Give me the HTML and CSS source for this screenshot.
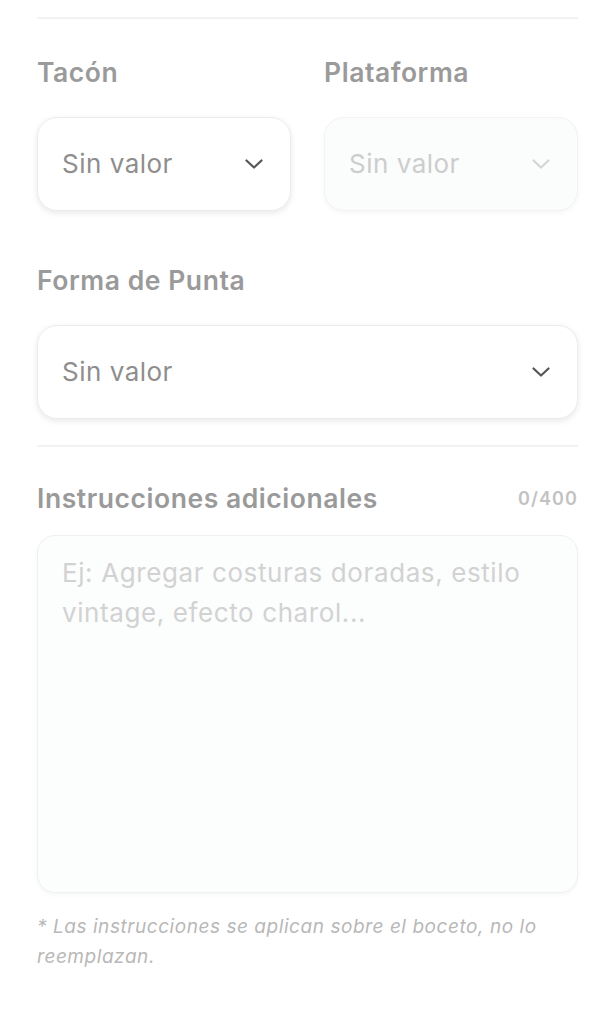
FILE: index.html
```html
<!DOCTYPE html>
<html lang="es">
<head>
<meta charset="utf-8">
<link rel="stylesheet" href="styles.css">
</head>
<body>
<div class="panel">
  <hr class="divider first">
  <div class="row">
    <div class="field">
      <div class="label">Tacón</div>
      <div class="select">
        <span class="value">Sin valor</span>
        <svg class="chev" width="18" height="10" viewBox="0 0 18 10"><path d="M1.5 1.5 L9 8.5 L16.5 1.5" fill="none" stroke="currentColor" stroke-width="2.2" stroke-linecap="round" stroke-linejoin="round"/></svg>
      </div>
    </div>
    <div class="field">
      <div class="label">Plataforma</div>
      <div class="select disabled">
        <span class="value">Sin valor</span>
        <svg class="chev" width="18" height="10" viewBox="0 0 18 10"><path d="M1.5 1.5 L9 8.5 L16.5 1.5" fill="none" stroke="currentColor" stroke-width="2.2" stroke-linecap="round" stroke-linejoin="round"/></svg>
      </div>
    </div>
  </div>
  <div class="field single">
    <div class="label">Forma de Punta</div>
    <div class="select">
      <span class="value">Sin valor</span>
      <svg class="chev" width="18" height="10" viewBox="0 0 18 10"><path d="M1.5 1.5 L9 8.5 L16.5 1.5" fill="none" stroke="currentColor" stroke-width="2.2" stroke-linecap="round" stroke-linejoin="round"/></svg>
    </div>
  </div>
  <hr class="divider second">
  <div class="head">
    <div class="label">Instrucciones adicionales</div>
    <div class="count">0/400</div>
  </div>
  <div class="textarea">
    <span class="placeholder">Ej: Agregar costuras doradas, estilo vintage, efecto charol...</span>
  </div>
  <p class="note">* Las instrucciones se aplican sobre el boceto, no lo reemplazan.</p>
</div>
</body>
</html>
```

FILE: styles.css
```css
* { box-sizing: border-box; }
html, body { margin: 0; padding: 0; background: #ffffff; }
body { font-family: Inter, "Open Sans", "Liberation Sans", sans-serif; }
.panel { padding: 0 38px 0 37px; display: flex; flex-direction: column; }
.divider { border: 0; height: 2px; background: #f2f2f2; margin: 0; }
.divider.first { margin-top: 17px; }
.row { display: grid; grid-template-columns: 1fr 1fr; column-gap: 33px; margin-top: 36px; }
.field { display: flex; flex-direction: column; }
.field.single { margin-top: 52px; }
.label { font-size: 26.5px; font-weight: 600; line-height: 34px; color: #9a9a9a; letter-spacing: 0.55px; }
.field .label { margin-bottom: 28px; }
.select {
  height: 94px; border: 1.5px solid #ececec; border-radius: 20px; background: #fff;
  display: flex; align-items: center; justify-content: space-between;
  padding: 0 27px 0 24px; box-shadow: 0 2px 6px rgba(0,0,0,0.09);
}
.select .value { font-size: 26px; color: #8e8e8e; line-height: 32px; letter-spacing: 0.5px; }
.select .chev { color: #555555; display: block; }
.select.disabled { background: #fbfcfc; border-color: #f3f3f3; box-shadow: 0 2px 5px rgba(0,0,0,0.04); }
.select.disabled .value { color: #cdcdcd; }
.select.disabled .chev { color: #d5d5d5; }
.divider.second { margin-top: 26px; }
.head { display: flex; justify-content: space-between; align-items: center; margin-top: 34px; }
.count { font-size: 18px; font-weight: 600; color: #c2c2c2; letter-spacing: 1.1px; }
.textarea {
  margin-top: 20px; height: 358px; border: 1.5px solid #f0f0f0; border-radius: 18px;
  background: #fcfdfd; padding: 17px 30px 0 24px; box-shadow: 0 2px 4px rgba(0,0,0,0.04);
}
.placeholder { font-size: 26px; line-height: 40px; color: #d2d2d2; display: block; letter-spacing: 0.6px; }
.note { margin: 19px 0 0; font-size: 19px; line-height: 30px; font-style: italic; color: #b8b8b8; letter-spacing: 0.55px; }
```
